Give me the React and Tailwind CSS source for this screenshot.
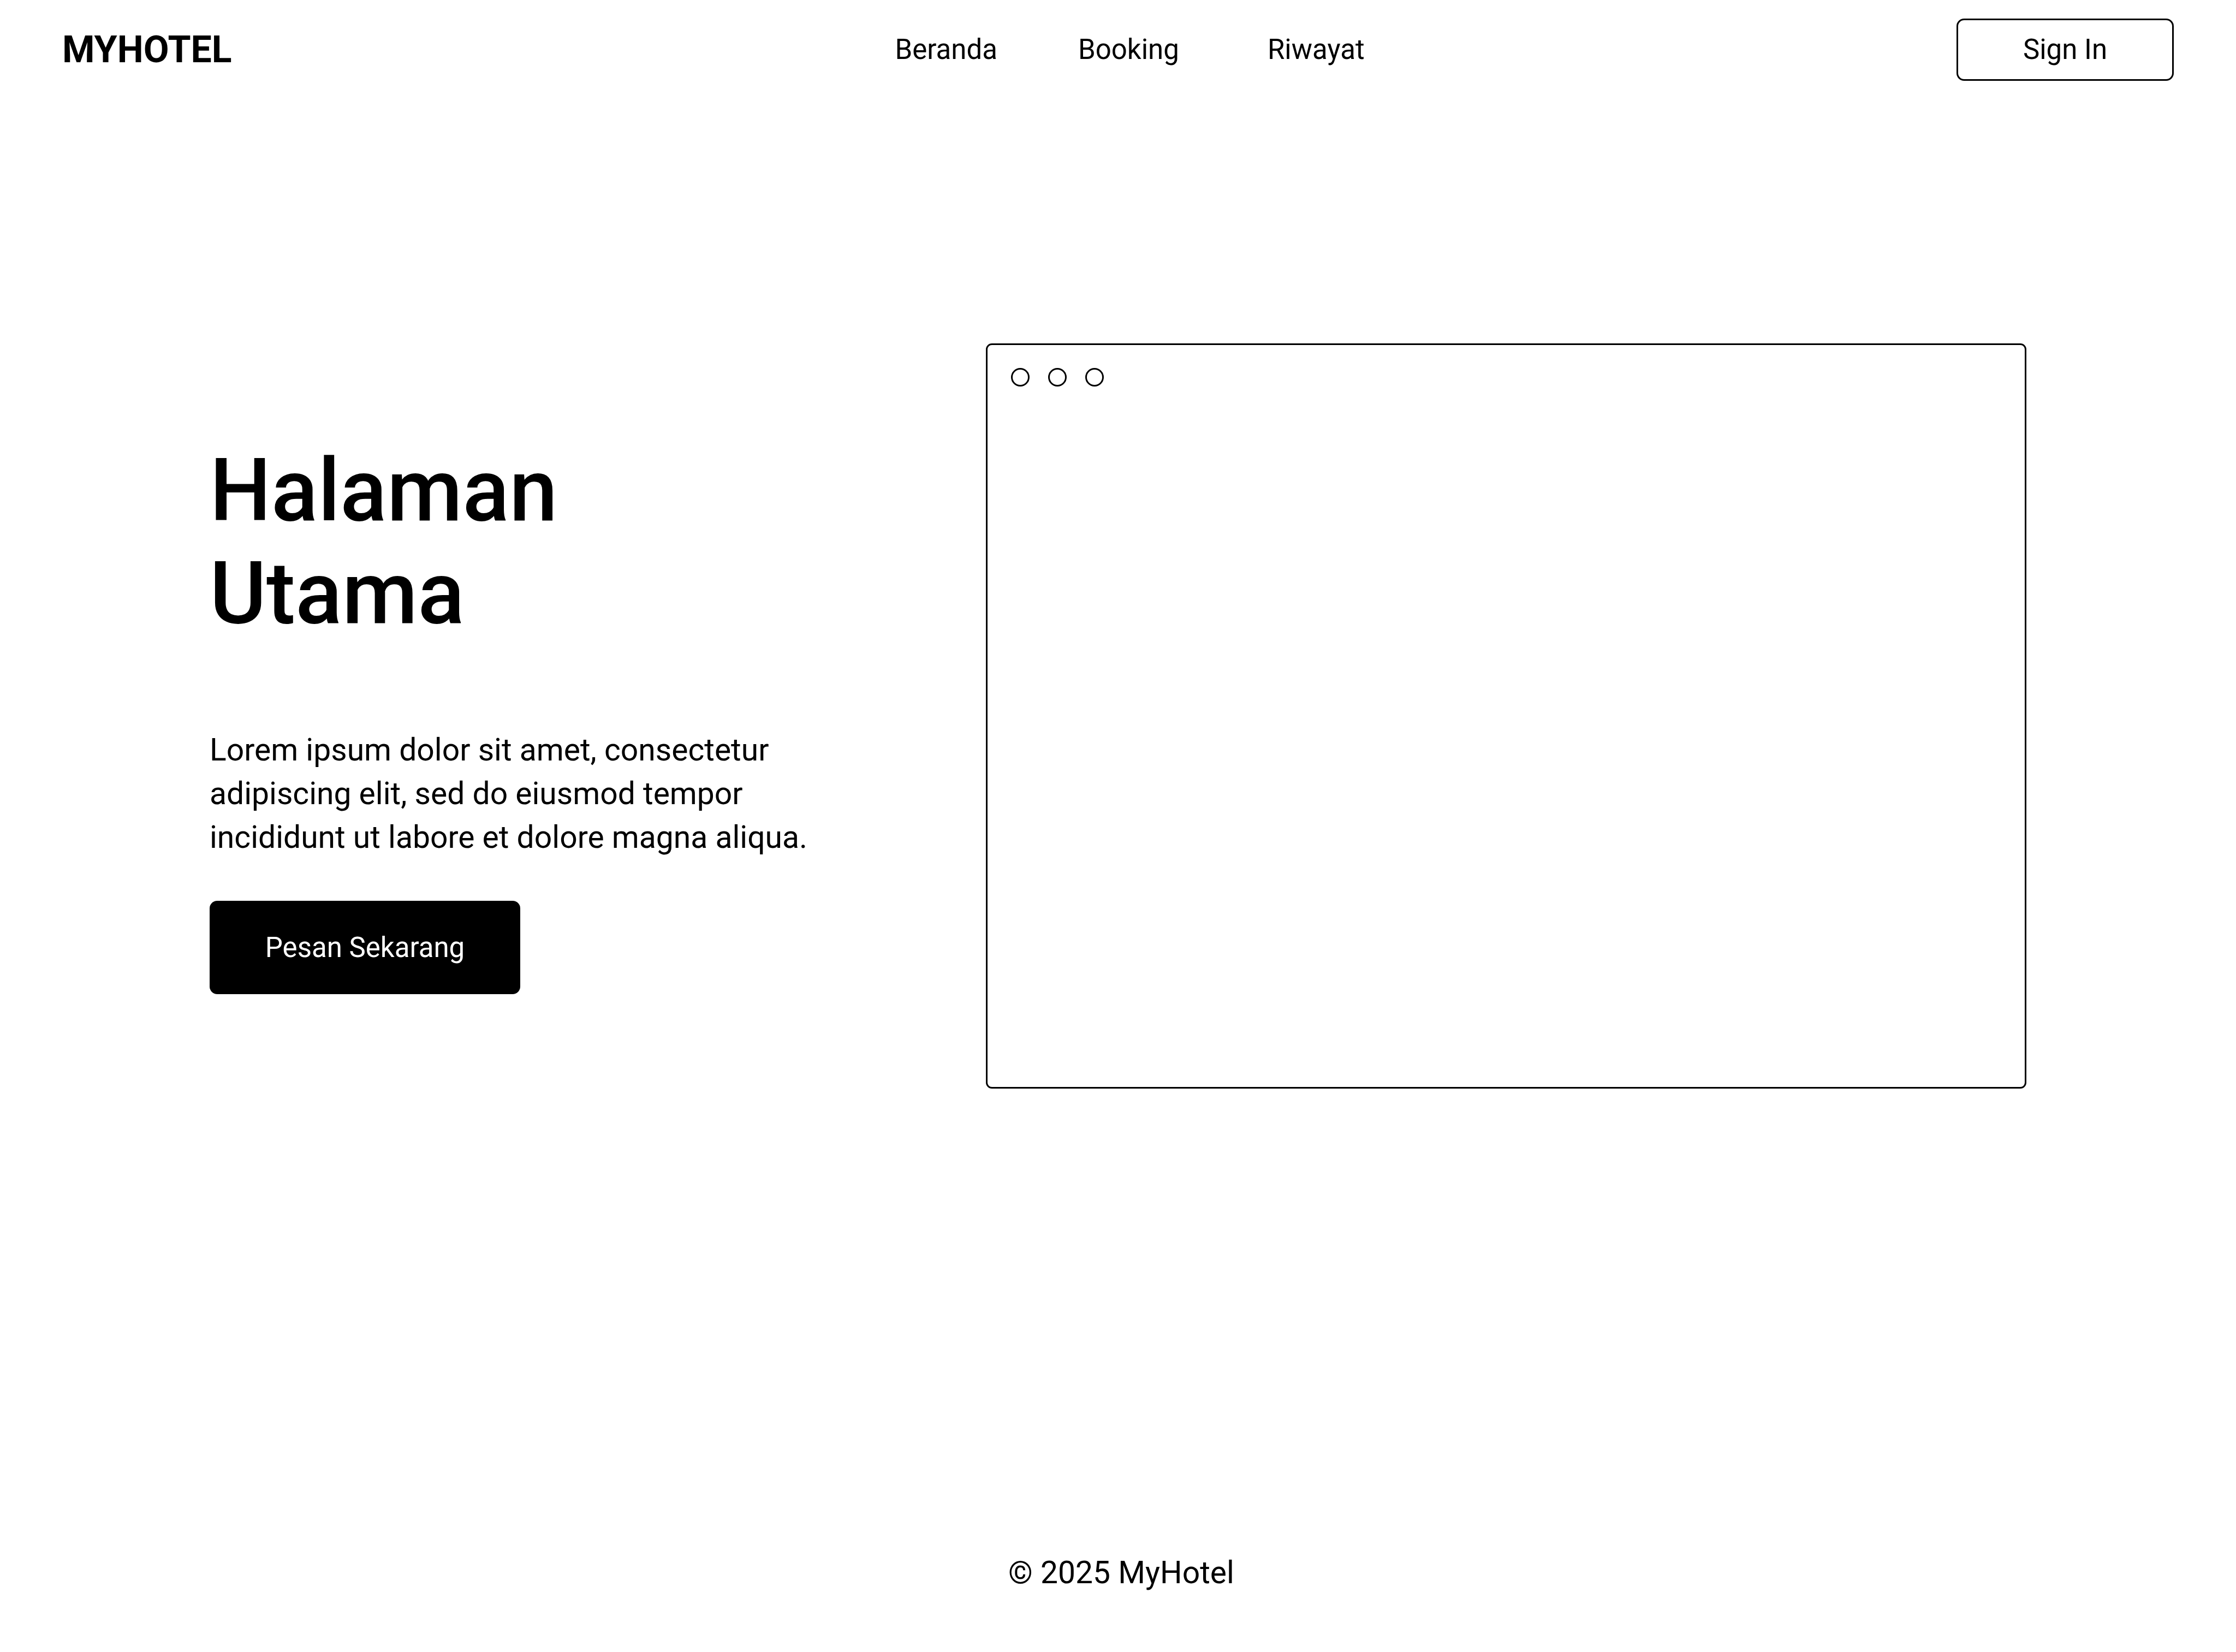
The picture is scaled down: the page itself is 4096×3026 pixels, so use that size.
export default function App() {
  return (
    <div className="flex min-h-screen flex-col bg-white font-['Roboto',sans-serif] text-black">
      <header className="grid grid-cols-[1fr_auto_1fr] items-center px-[114px] pt-[34px]">
        <a href="#" className="text-[68px] leading-[80px] font-bold">MYHOTEL</a>
        <nav className="flex pl-[43px] text-[51px] leading-[60px]">
          <a href="#beranda" className="mr-[148px]">Beranda</a>
          <a href="#booking" className="mr-[162px]">Booking</a>
          <a href="#riwayat">Riwayat</a>
        </nav>
        <button type="button" className="h-[114px] w-[398px] justify-self-end rounded-[14px] border-3 border-black text-[51px] leading-[60px]">Sign In</button>
      </header>
      <main className="flex items-start justify-between px-[384px] pt-[481px]">
        <section className="flex flex-col items-start pt-[176px]">
          <h1 className="text-[159px] leading-[188px] font-medium">Halaman<br />Utama</h1>
          <p className="mt-[153px] text-[57px] leading-[80px]">Lorem ipsum dolor sit amet, consectetur<br />adipiscing elit, sed do eiusmod tempor<br />incididunt ut labore et dolore magna aliqua.</p>
          <button type="button" className="mt-[76px] h-[171px] w-[569px] rounded-[14px] bg-black text-[51px] leading-[60px] text-white">Pesan Sekarang</button>
        </section>
        <section aria-label="Preview" className="h-[1365px] w-[1906px] rounded-[11px] border-3 border-black">
          <div className="flex gap-[34px] px-[43px] pt-[42px]">
            <span className="size-[34px] rounded-full border-3 border-black" />
            <span className="size-[34px] rounded-full border-3 border-black" />
            <span className="size-[34px] rounded-full border-3 border-black" />
          </div>
        </section>
      </main>
      <footer className="mt-auto pb-[105px] pl-[12px] text-center text-[57px] leading-[80px]">© 2025 MyHotel</footer>
    </div>
  );
}
